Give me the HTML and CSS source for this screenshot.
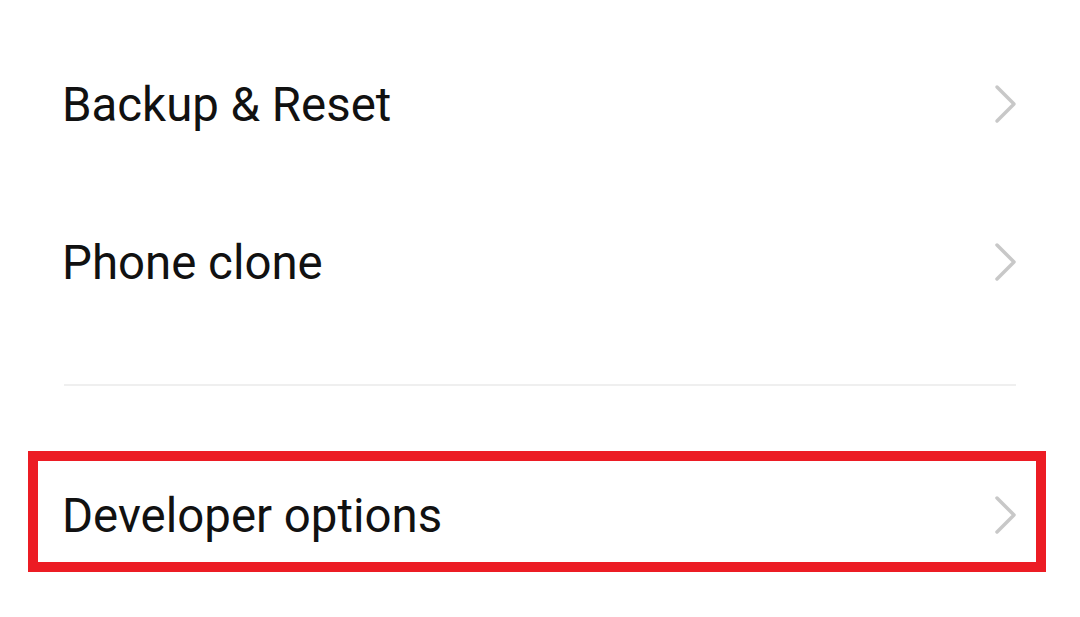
FILE: index.html
```html
<!DOCTYPE html>
<html lang="en">
<head>
  <meta charset="UTF-8">
  <meta name="viewport" content="width=device-width, initial-scale=1.0">
  <title>Settings</title>
  <link rel="stylesheet" href="styles.css">
</head>
<body>

  <div class="settings-list">
    <div class="group">
      <div class="row">
        <span class="label">Backup &amp; Reset</span>
        <svg class="chevron" viewBox="0 0 24 40"><path d="M3 3 L20 20 L3 37" /></svg>
      </div>
      <div class="row">
        <span class="label">Phone clone</span>
        <svg class="chevron" viewBox="0 0 24 40"><path d="M3 3 L20 20 L3 37" /></svg>
      </div>
    </div>

    <div class="divider"></div>

    <div class="group">
      <div class="row highlighted">
        <span class="label">Developer options</span>
        <svg class="chevron" viewBox="0 0 24 40"><path d="M3 3 L20 20 L3 37" /></svg>
      </div>
    </div>
  </div>

</body>
</html>
```

FILE: styles.css
```css
body {
  font-family: Roboto, "Noto Sans", sans-serif;
  margin: 0;
  padding: 0;
  background-color: #ffffff;
  color: #111111;
  width: 1080px;
  height: 617px;
  overflow: hidden;
}

.settings-list {
  display: flex;
  flex-direction: column;
  padding: 25px 64px 0 62px;
}

.group {
  display: flex;
  flex-direction: column;
}

.row {
  display: flex;
  align-items: center;
  justify-content: space-between;
  height: 158px;
  position: relative;
}

.label {
  font-size: 47.4px;
  line-height: 1;
  padding-top: 4px;
}

.chevron {
  width: 24px;
  height: 40px;
  fill: none;
  stroke: #c8c8c8;
  stroke-width: 3.5;
  stroke-linecap: round;
  stroke-linejoin: round;
  margin-right: -2px;
}

.divider {
  height: 2px;
  background-color: #efefef;
  margin: 43px 0 50px 2px;
}

/* red annotation box over the row */
.highlighted::after {
  content: "";
  position: absolute;
  left: -34px;
  right: -30px;
  top: 15px;
  height: 101px;
  border: 10px solid #ec1c24;
}
```
